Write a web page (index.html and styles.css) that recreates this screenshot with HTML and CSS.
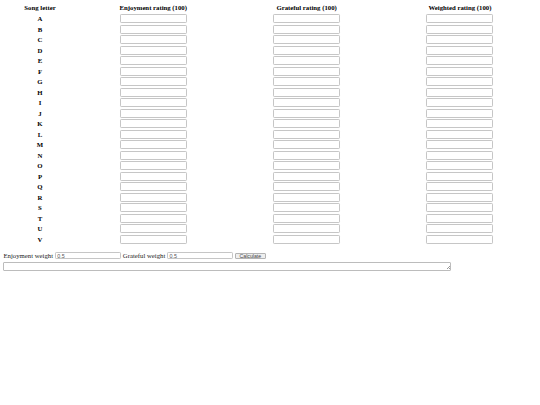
FILE: index.html
```html
<!DOCTYPE html>
<html>
<head>
<meta charset="utf-8">
<title>Song ratings</title>
<link rel="stylesheet" href="styles.css">
</head>
<body>
<table class="ratings">
<colgroup><col class="col-letter"><col><col><col></colgroup>
<thead>
<tr class="head-row"><th>Song letter</th><th>Enjoyment rating (100)</th><th>Grateful rating (100)</th><th>Weighted rating (100)</th></tr>
</thead>
<tbody>
<tr><th>A</th><td><input class="field" type="text"></td><td><input class="field" type="text"></td><td><input class="field" type="text"></td></tr>
<tr><th>B</th><td><input class="field" type="text"></td><td><input class="field" type="text"></td><td><input class="field" type="text"></td></tr>
<tr><th>C</th><td><input class="field" type="text"></td><td><input class="field" type="text"></td><td><input class="field" type="text"></td></tr>
<tr><th>D</th><td><input class="field" type="text"></td><td><input class="field" type="text"></td><td><input class="field" type="text"></td></tr>
<tr><th>E</th><td><input class="field" type="text"></td><td><input class="field" type="text"></td><td><input class="field" type="text"></td></tr>
<tr><th>F</th><td><input class="field" type="text"></td><td><input class="field" type="text"></td><td><input class="field" type="text"></td></tr>
<tr><th>G</th><td><input class="field" type="text"></td><td><input class="field" type="text"></td><td><input class="field" type="text"></td></tr>
<tr><th>H</th><td><input class="field" type="text"></td><td><input class="field" type="text"></td><td><input class="field" type="text"></td></tr>
<tr><th>I</th><td><input class="field" type="text"></td><td><input class="field" type="text"></td><td><input class="field" type="text"></td></tr>
<tr><th>J</th><td><input class="field" type="text"></td><td><input class="field" type="text"></td><td><input class="field" type="text"></td></tr>
<tr><th>K</th><td><input class="field" type="text"></td><td><input class="field" type="text"></td><td><input class="field" type="text"></td></tr>
<tr><th>L</th><td><input class="field" type="text"></td><td><input class="field" type="text"></td><td><input class="field" type="text"></td></tr>
<tr><th>M</th><td><input class="field" type="text"></td><td><input class="field" type="text"></td><td><input class="field" type="text"></td></tr>
<tr><th>N</th><td><input class="field" type="text"></td><td><input class="field" type="text"></td><td><input class="field" type="text"></td></tr>
<tr><th>O</th><td><input class="field" type="text"></td><td><input class="field" type="text"></td><td><input class="field" type="text"></td></tr>
<tr><th>P</th><td><input class="field" type="text"></td><td><input class="field" type="text"></td><td><input class="field" type="text"></td></tr>
<tr><th>Q</th><td><input class="field" type="text"></td><td><input class="field" type="text"></td><td><input class="field" type="text"></td></tr>
<tr><th>R</th><td><input class="field" type="text"></td><td><input class="field" type="text"></td><td><input class="field" type="text"></td></tr>
<tr><th>S</th><td><input class="field" type="text"></td><td><input class="field" type="text"></td><td><input class="field" type="text"></td></tr>
<tr><th>T</th><td><input class="field" type="text"></td><td><input class="field" type="text"></td><td><input class="field" type="text"></td></tr>
<tr><th>U</th><td><input class="field" type="text"></td><td><input class="field" type="text"></td><td><input class="field" type="text"></td></tr>
<tr><th>V</th><td><input class="field" type="text"></td><td><input class="field" type="text"></td><td><input class="field" type="text"></td></tr>
</tbody>
</table>
<div class="weights"><span class="label">Enjoyment weight</span><input class="field small" type="text" value="0.5"><span class="label">Grateful weight</span><input class="field small" type="text" value="0.5"><button class="calc" type="button">Calculate</button></div>
<div class="output-wrap"><textarea class="output" rows="1"></textarea></div>
</body>
</html>
```
FILE: styles.css
```css
html, body {
  background: #fff;
}
body {
  margin: 3.4px;
  font-family: "Liberation Serif", serif;
  font-size: 6.75px;
  color: #000;
}
.ratings {
  width: 100%;
  table-layout: fixed;
  border-collapse: collapse;
  border-spacing: 0;
}
.col-letter {
  width: 73.2px;
}
.ratings th,
.ratings td {
  padding: 0.75px 0;
  text-align: center;
  vertical-align: middle;
  line-height: 9px;
}
.head-row th {
  height: 8.5px;
  padding: 0.75px 0;
  line-height: 8.5px;
}
.ratings th {
  font-weight: bold;
}
.field {
  display: block;
  box-sizing: border-box;
  width: 67px;
  height: 9px;
  margin: 0 auto;
  padding: 0 1.5px;
  border: 1px solid #c6c6c6;
  border-radius: 1.2px;
  background: #fff;
  font-family: "Liberation Sans", sans-serif;
  font-size: 5.4px;
  color: #555;
  outline: none;
}
.weights {
  display: flex;
  align-items: center;
  margin-top: 7.6px;
  height: 8px;
}
.label {
  white-space: nowrap;
  margin-right: 1.6px;
  color: #222;
}
.field.small {
  height: 7px;
  width: 66.5px;
  margin: 0 1.6px 0 0;
  line-height: 5px;
}
.calc {
  box-sizing: border-box;
  width: 30.7px;
  height: 6.8px;
  padding: 0;
  border: 1px solid #b4b4b4;
  border-radius: 1px;
  background: #efefef;
  font-family: "Liberation Sans", sans-serif;
  font-size: 5.2px;
  line-height: 4.6px;
  color: #444;
}
.output-wrap {
  position: relative;
  width: 448px;
  margin-top: 1.6px;
}
.output {
  display: block;
  box-sizing: border-box;
  width: 448px;
  height: 9px;
  margin: 0;
  padding: 0;
  border: 1px solid #bcbcbc;
  border-radius: 1px;
  font-family: "Liberation Mono", monospace;
  font-size: 5.6px;
  resize: none;
}
.output-wrap::after {
  content: "";
  position: absolute;
  right: 1.5px;
  bottom: 1.5px;
  width: 3px;
  height: 3px;
  background: linear-gradient(135deg, transparent 0 45%, #999 45% 58%, transparent 58% 72%, #999 72% 85%, transparent 85%);
  pointer-events: none;
}
```
